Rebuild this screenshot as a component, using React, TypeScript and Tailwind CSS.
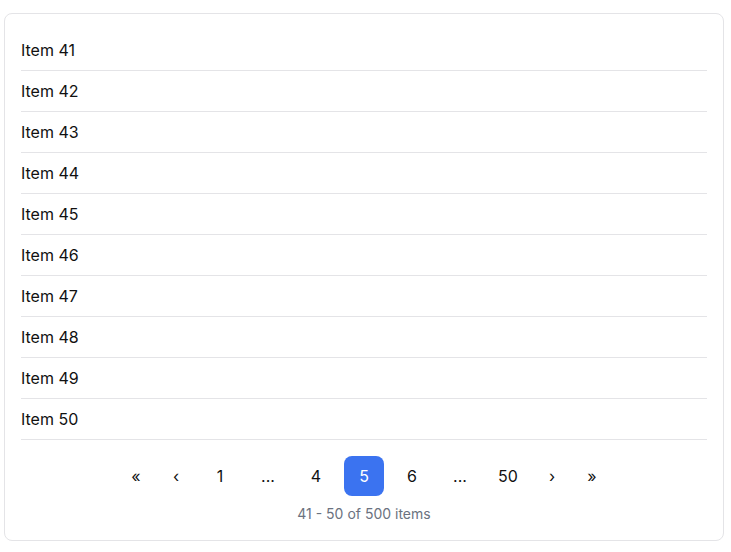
const items = Array.from({ length: 10 }, (_, i) => `Item ${41 + i}`);

type PageBtn = { label: string; kind: 'arrow' | 'num' | 'dots'; active?: boolean };

const pages: PageBtn[] = [
  { label: '«', kind: 'arrow' },
  { label: '‹', kind: 'arrow' },
  { label: '1', kind: 'num' },
  { label: '...', kind: 'dots' },
  { label: '4', kind: 'num' },
  { label: '5', kind: 'num', active: true },
  { label: '6', kind: 'num' },
  { label: '...', kind: 'dots' },
  { label: '50', kind: 'num' },
  { label: '›', kind: 'arrow' },
  { label: '»', kind: 'arrow' },
];

export default function App() {
  return (
    <div className="min-h-screen bg-white pt-[13px] pl-1" style={{ fontFamily: 'Inter, "Noto Sans", sans-serif' }}>
      <div className="w-[720px] rounded-lg border border-[#e4e4e7] p-4">
        <ul>
          {items.map((item) => (
            <li key={item} className="flex h-[41px] items-center border-b border-[#e4e4e7] text-base text-[#111111]">
              {item}
            </li>
          ))}
        </ul>
        <div className="mt-4 flex justify-center gap-2">
          {pages.map((p, i) => (
            <button
              key={i}
              className={`flex h-10 items-center justify-center rounded-lg text-base ${
                p.kind === 'arrow' ? 'w-8' : 'w-10'
              } ${p.active ? 'bg-[#3b73f0] text-white' : 'text-[#111111]'}`}
            >
              {p.label}
            </button>
          ))}
        </div>
        <p className="mt-2 text-center text-sm text-[#6b7280]">41 - 50 of 500 items</p>
      </div>
    </div>
  );
}
